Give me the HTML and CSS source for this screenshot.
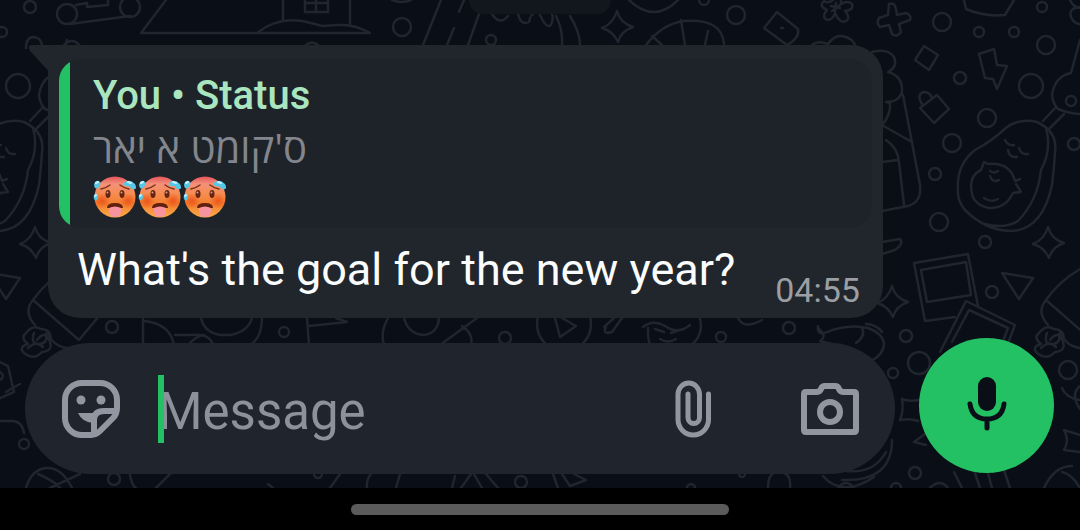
FILE: index.html
```html
<!DOCTYPE html>
<html lang="en">
<head>
<meta charset="utf-8">
<meta name="viewport" content="width=device-width, initial-scale=1">
<title>Chat</title>
<link rel="stylesheet" href="styles.css">
</head>
<body>
<div class="chat">
  <svg class="wallpaper" viewBox="0 0 1080 488" preserveAspectRatio="xMinYMin slice" aria-hidden="true">
    <defs>
      <path id="sparkle" d="M0-16Q3-4 16 0Q4 4 1 15Q-4 4-15 1Q-4-3 0-16Z"/>
      <g id="garden">
        <circle cx="1031" cy="86" r="12"/>
        <path d="M958 190Q956 165 975 150Q992 141 1007 127Q1020 118 1037 122Q1058 132 1055 152Q1054 170 1052 185Q1042 231 1010 231Q985 230 965 210Q957 200 958 190M1046 128Q1052 150 1041 170Q1038 200 1018 221Q1005 229 985 224M1043 121l13-14M1050 128l14-14"/>
        <path d="M972 194Q968 176 981 170L984 162L988 164Q1010 162 1015 181L1020 179M1016 184L1021 192L1013 193Q1006 208 990 208Q975 206 972 194M1005 140q3 6 9 5M1019 148q2 7 9 6M1008 150q1 8 9 7M990 171q4 3 8 0M990 176q2 7 9 4M984 198q7 5 14 1"/>
        <path d="M1080 40L1071 73Q1055 76 1052 95Q1053 104 1058 109Q1070 114 1082 114"/>
        <circle cx="1071" cy="101" r="5"/>
        <use href="#sparkle" x="1048" y="243"/>
        <path d="M1002 273L1033 278L1019 299Z"/>
        <path d="M1082 268Q1060 280 1046 300L1092 340M1046 300Q1036 312 1048 325M1060 333Q1068 348 1082 348M1092 340L1112 316"/>
        <path d="M1039 333q7-9 15-4q12 1 9 13q3 9-8 10q-8 9-18 1q-6-6 4-9q-8-6-2-11M1047 333q-4 12 6 11q8-1 6-10M1041 348q8-8 15-1M1050 340q8-10 12 0"/>
      </g>
    </defs>
    <rect width="1080" height="488" class="night"/>
    <g class="doodle">
      <use href="#garden"/>
      <use href="#garden" x="-1013"/>
      <circle cx="30" cy="7" r="6"/><circle cx="67" cy="14" r="10"/><circle cx="130" cy="7" r="10"/><circle cx="2" cy="32" r="5"/>
      <path d="M70 24L130 16M76 5L87 3V7L108 5V0M26 48Q26 37 34 37Q42 38 42 47M63 46Q72 36 80 46"/>
      <path d="M166 0L141 33H370Q355 24 338 25L322 26Q312 23 302 21Q277 17 257 33M283 0V20M350 0V24M305 0V12H328V0M316 0V12M305 3H328M306 45q6-5 12 0"/>
      <circle cx="402" cy="27" r="9"/><path d="M392 0q10 4 19 0"/>
      <path d="M441 0L423 45M464 0L459 12M454 28L447 45M479 14L468 45M492 14q8 12 16 2M518 14q3 12 11 8q2-8 4-8M540 15q5 12 10 11q4-5 2-12M556 16Q563 30 562 45M570 16Q580 32 580 45"/>
      <circle cx="491" cy="40" r="5"/>
      <use href="#sparkle" x="617" y="27"/>
      <path d="M629 0Q654 24 678 0M646 45Q662 24 684 21Q722 18 724 44M681 20L685 45M652 36L662 45M708 31L705 45"/>
      <circle cx="704" cy="0" r="5"/><circle cx="736" cy="15" r="9"/>
      <path d="M777 12L798 29Q800 38 787 45L764 28ZM781 28h2"/>
      <path d="M833 0Q828 4 824 1Q818 6 827 10Q821 17 827 20Q833 20 835 13Q840 24 846 21Q851 18 845 11Q854 10 852 4Q848 0 841 4V0M831 6L840 8M836 3L835 11M832 11L840 5"/>
      <path d="M812 45q6-5 16-1q6-9 14-8q12 2 14 12"/>
      <path d="M889 4q6-2 7 5l1 6l9-2q6 2 4 7l-11 4l2 8q-4 6-9 2l-3-9l-9 2q-4-4-1-9l9-3z"/>
      <circle cx="942" cy="22" r="9"/><circle cx="1042" cy="7" r="5"/><circle cx="979" cy="32" r="5"/><circle cx="1014" cy="32" r="5"/><circle cx="1046" cy="45" r="9"/>
      <path d="M964 0L966 9Q985 17 1005 15L1014 0M1070 0q3 7 10 8M1080 7Q1068 8 1071 17Q1074 24 1080 24"/>
      <path d="M924 46L938 55L929 70L915 60ZM979 54L994 49L997 65L1007 66L997 89L993 79L985 78ZM937 95L949 109L934 123L920 108Z"/>
      <path d="M922 104Q916 94 924 92Q930 92 932 98"/>
      <circle cx="960" cy="78" r="6"/><circle cx="987" cy="118" r="9"/><circle cx="952" cy="143" r="9"/><circle cx="935" cy="174" r="6"/><circle cx="1074" cy="144" r="6"/>
      <path d="M872 52q16-4 22 5q4 10-6 15q15 4 14 20q-3 10-16 10l4 1q1 12-8 22L910 141M903 95L920 185Q922 202 908 206L882 211M886 140Q898 148 899 162L904 205M882 162L898 160"/>
      <path d="M882 242L900 239Q904 244 895 250L882 254"/>
      <circle cx="939" cy="222" r="9"/><circle cx="985" cy="242" r="6"/><circle cx="992" cy="292" r="6"/>
      <path d="M914 263L968 254L978 306M914 263L925 321L955 317M921 270L966 262L971 295L927 302ZM940 352L966 301L1015 325L1007 346M952 342L969 310L1008 328L1002 344"/>
      <use href="#sparkle" x="892" y="302"/>
      <circle cx="906" cy="336" r="6"/><circle cx="919" cy="363" r="11"/><circle cx="893" cy="373" r="5"/><circle cx="1068" cy="370" r="9"/>
      <circle cx="112" cy="327" r="6"/><circle cx="284" cy="332" r="5"/>
      <path d="M143 318V345M143 321Q170 323 174 345M201 318Q204 332 220 335H230Q248 332 252 318M262 318Q262 338 250 345M175 335H190Q210 333 213 345M190 343q8-8 14-8M307 318L309 345M309 326L347 322L336 318M388 318Q380 332 384 345M404 318Q408 334 424 335Q438 333 439 318M440 345L477 318M462 326Q474 334 471 345"/>
      <circle cx="505" cy="338" r="6"/>
      <circle cx="564" cy="324" r="27"/><path d="M555 318L560 337L576 326L562 318M604 327L614 318M606 327q-4 8 6 5L622 318M643 327Q653 319 665 326Q678 335 690 325M648 328Q647 345 655 352M700 318Q704 336 690 346M655 329l9 3M671 333l9-3M660 339q8 5 16 0M738 318q6 12 24 2"/>
      <circle cx="721" cy="337" r="5"/><circle cx="789" cy="328" r="6"/>
      <path d="M818 326q-2 12 14 4Q850 324 868 328Q884 334 884 345Q882 356 872 360M818 328q10 8 2 13q14 4 22 4M862 328q4 8-6 15M866 324q10 0 16 8"/>
      <path d="M0 362L8 366L14 392M20 384q-8 4-14 8M0 398L14 392M0 421h12q10 0 12 12M0 372q6 4 0 8"/>
      <circle cx="24" cy="444" r="5"/><path d="M902 399Q909 402 919 400M902 399Q904 410 900 420Q910 418 918 421M914 442L925 434M914 442L926 445"/>
      <path d="M1062 388Q1066 398 1080 400M1080 386Q1070 394 1080 409M1064 430L1080 435M1064 430Q1070 440 1064 450L1080 452M1072 466Q1054 466 1044 488M1062 472Q1072 474 1080 488"/>
      <path d="M892 440Q892 482 842 480M886 452Q874 474 846 471M823 476Q842 498 874 477M838 488q8-10 16 0"/>
      <path d="M26 488Q32 468 48 468Q62 468 72 488M38 474Q56 482 60 488M80 474L50 488M130 475Q132 486 136 488M170 474L156 488M268 484l5 4M340 474L330 488M371 474Q366 480 367 488M400 474L396 488M455 476L452 488M471 474L461 488M474 474L482 488M486 474L498 488M553 474L558 488M562 474L570 486L586 480L574 474M768 488Q768 472 778 472Q792 472 790 488M954 472L962 488M975 473L980 488M988 473L992 488M1004 470L1010 488M930 488q10-10 18 0"/>
      <circle cx="114" cy="479" r="6"/><circle cx="521" cy="482" r="6"/><circle cx="915" cy="473" r="6"/><circle cx="742" cy="474" r="3"/><circle cx="896" cy="488" r="5"/><circle cx="691" cy="488" r="4"/><circle cx="318" cy="474" r="4"/>
    </g>
  </svg>

  <div class="date-chip"></div>

  <main class="messages">
    <article class="bubble">
      <svg class="tail" viewBox="0 0 24 30" aria-hidden="true"><path d="M4 0H24V30L2 6Q-1 0 4 0Z"/></svg>
      <blockquote class="quote">
        <div class="quote-bar"></div>
        <div class="quote-content">
          <p class="quote-title">You • Status</p>
          <p class="quote-text">ס'קומט א יאר</p>
          <div class="emojis" role="img" aria-label="Three hot faces">
            <svg class="emoji" viewBox="0 0 45 45">
              <defs>
                <linearGradient id="skin" x1="0" y1="0" x2="0" y2="1"><stop offset="0" stop-color="#e2545a"/><stop offset=".18" stop-color="#f4907a"/><stop offset=".4" stop-color="#f58e55"/><stop offset=".65" stop-color="#f4802f"/><stop offset="1" stop-color="#f9aa48"/></linearGradient>
                <radialGradient id="flush"><stop offset="0" stop-color="#e94a15" stop-opacity=".8"/><stop offset="1" stop-color="#e94a15" stop-opacity="0"/></radialGradient>
                <g id="hot-face">
                  <circle cx="22" cy="22" r="20.500" fill="url(#skin)"/>
                  <ellipse cx="9" cy="26" rx="8" ry="8" fill="url(#flush)"/><ellipse cx="35" cy="26" rx="8" ry="8" fill="url(#flush)"/>
                  <path d="M8 14Q13 13 17 10M27 10Q31 13 36 14" fill="none" stroke="#7a3018" stroke-width="1.500" stroke-linecap="round"/>
                  <ellipse cx="15" cy="19" rx="2.500" ry="4" fill="#682411"/><ellipse cx="29" cy="19" rx="2.500" ry="4" fill="#682411"/>
                  <circle cx="14.500" cy="17.500" r="1" fill="#d9a08d"/><circle cx="28.500" cy="17.500" r="1" fill="#d9a08d"/>
                  <path d="M15 33Q15 29 22 29Q29 29 29 33" fill="#63200f" stroke="#63200f" stroke-width="2" stroke-linejoin="round"/>
                  <path d="M16 33Q22 30 28 33V37Q27 42 22 42Q17 42 16 37Z" fill="#f893a0"/>
                  <path d="M1 10Q2 5 6 6Q9 8 6 12Q2 16 1 10ZM1 20Q4 17 5 21Q5 26 2 25Q0 24 1 20ZM31 8Q36 3 42 9Q45 15 40 14Q37 14 37 11Q30 12 31 8Z" fill="#55c8e8"/>
                  <path d="M3 8l2-1M35 7l3 1M2 21l1-1" stroke="#c5f4ff" stroke-width="2" stroke-linecap="round"/>
                </g>
              </defs>
              <use href="#hot-face"/>
            </svg>
            <svg class="emoji" viewBox="0 0 45 45"><use href="#hot-face"/></svg>
            <svg class="emoji" viewBox="0 0 45 45"><use href="#hot-face"/></svg>
          </div>
        </div>
      </blockquote>
      <div class="body">
        <p class="text">What's the goal for the new year?</p>
        <time class="time" datetime="04:55">04:55</time>
      </div>
    </article>
  </main>

  <form class="composer">
    <div class="field">
      <button class="icon-button" type="button" aria-label="Stickers">
        <svg class="icon-sticker" viewBox="0 0 58 58"><path class="line" d="M20 3H38A17 17 0 0 1 55 20V28Q55 34 51 38L38 51Q34 55 29 55H20A17 17 0 0 1 3 38V20A17 17 0 0 1 20 3ZM54 31H42Q32 31 32 40V54"/><circle cx="19" cy="20" r="4.500"/><circle cx="39" cy="20" r="4.500"/><path d="M16 33H35L31 43Q20 42 16 33Z"/></svg>
      </button>
      <div class="entry">
        <input class="input" type="text" placeholder="Message" aria-label="Message">
        <span class="caret"></span>
      </div>
      <button class="icon-button" type="button" aria-label="Attach">
        <svg class="icon-clip" viewBox="0 0 36 58"><path class="line" d="M33.500 14V39.500A15.250 15.500 0 0 1 3 39.500V14.500A10.750 11.500 0 0 1 24.500 14.500V37.500A5.750 6 0 0 1 13 37.500V14"/></svg>
      </button>
      <button class="icon-button" type="button" aria-label="Camera">
        <svg class="icon-camera" viewBox="0 0 58 52"><path class="line" d="M5 9H15Q19 9 20 6Q21 3 24 3H34Q37 3 38 6Q39 9 43 9H53Q55 9 55 11V47Q55 49 53 49H5Q3 49 3 47V11Q3 9 5 9Z"/><circle class="line" cx="29" cy="29" r="10"/></svg>
      </button>
    </div>
    <button class="mic" type="button" aria-label="Record voice message">
      <svg class="icon-mic" viewBox="0 0 40 56"><rect x="11" y="1" width="18" height="34" rx="9"/><path d="M3 28Q5 43 20 43Q35 43 37 28M20 43V52" fill="none" stroke="currentColor" stroke-width="5" stroke-linecap="round"/></svg>
    </button>
  </form>
</div>
<footer class="nav"><div class="handle"></div></footer>
</body>
</html>
```
FILE: styles.css
```css
* {
  box-sizing: border-box;
}

body {
  margin: 0;
  min-height: 100vh;
  display: flex;
  flex-direction: column;
  background: #000;
  font-family: Roboto, "Noto Sans", "Open Sans", sans-serif;
}

p,
blockquote {
  margin: 0;
}

button {
  padding: 0;
  border: 0;
  background: none;
  color: inherit;
}

.chat {
  position: relative;
  flex: 1;
  display: flex;
  flex-direction: column;
  justify-content: space-between;
  overflow: hidden;
  background: #090e17;
}

.wallpaper {
  position: absolute;
  inset: 0;
  width: 100%;
  height: 100%;
}

.night {
  fill: #090e17;
}

.doodle {
  fill: none;
  stroke: #20262d;
  stroke-width: 2.5;
  stroke-linejoin: round;
  stroke-linecap: round;
}

.date-chip {
  position: absolute;
  top: 0;
  left: 50%;
  width: 142px;
  height: 14px;
  transform: translateX(-50%);
  border-radius: 0 0 20px 20px;
  background: #12171e;
}

.messages {
  position: relative;
  display: flex;
  padding: 45px 48px 20px;
}

.bubble {
  position: relative;
  padding: 14px 11px 8px;
  border-radius: 0 32px 32px 32px;
  background: #20262c;
}

.tail {
  position: absolute;
  top: 0;
  left: -20px;
  width: 24px;
  height: 30px;
  fill: #20262c;
}

.quote {
  display: flex;
  overflow: hidden;
  border-radius: 22px;
  background: #1e2329;
}

.quote-bar {
  flex: none;
  width: 11px;
  background: #23c163;
}

.quote-content {
  padding: 12px 24px 8px 23px;
}

.quote-title {
  color: #a9e6c0;
  font-size: 40px;
  font-weight: 500;
  line-height: 50px;
}

.quote-text {
  color: #83868d;
  font-family: "Open Sans", "Noto Sans", sans-serif;
  font-size: 40px;
  line-height: 54px;
}

.emojis {
  display: flex;
}

.emoji {
  width: 45px;
  height: 45px;
}

.body {
  display: flex;
  align-items: flex-end;
  justify-content: space-between;
  gap: 40px;
  padding: 12px 12px 0 18px;
}

.text {
  padding-bottom: 10px;
  color: #fafcfd;
  font-size: 45px;
  line-height: 60px;
}

.time {
  color: #9b9fa3;
  font-size: 34px;
  line-height: 40px;
}

.composer {
  position: relative;
  display: flex;
  align-items: flex-start;
  gap: 24px;
  padding: 0 26px 14px 25px;
}

.field {
  flex: 1;
  min-width: 0;
  display: flex;
  align-items: center;
  height: 131px;
  margin-top: 5px;
  padding: 0 36px 0 37px;
  border-radius: 66px;
  background: #20252d;
  color: #9296a0;
}

.icon-button {
  display: flex;
  flex: none;
}

.icon-button svg {
  height: 58px;
  fill: currentColor;
}

.icon-button .icon-camera {
  height: 52px;
}

.icon-button .line {
  fill: none;
  stroke: currentColor;
  stroke-width: 6;
  stroke-linecap: round;
  stroke-linejoin: round;
}

.icon-button .icon-clip .line {
  stroke-width: 5;
}

.icon-button + .icon-button {
  margin-left: 90px;
}

.entry {
  position: relative;
  flex: 1;
  min-width: 0;
  margin: 0 24px 0 38px;
}

.input {
  display: block;
  width: 100%;
  height: 68px;
  padding: 6px 0 0;
  border: 0;
  outline: 0;
  background: none;
  color: #fafcfd;
  font-family: inherit;
  font-size: 51px;
}

.input::placeholder {
  color: #8d919b;
  opacity: 1;
}

.caret {
  position: absolute;
  top: 0;
  left: 0;
  width: 6px;
  height: 68px;
  background: #23c163;
}

.mic {
  flex: none;
  display: flex;
  align-items: center;
  justify-content: center;
  width: 135px;
  height: 135px;
  padding-bottom: 4px;
  border-radius: 50%;
  background: #23c163;
  color: #090e17;
}

.icon-mic {
  height: 56px;
  fill: currentColor;
}

.nav {
  display: flex;
  align-items: center;
  justify-content: center;
  height: 42px;
}

.handle {
  width: 35%;
  height: 11px;
  border-radius: 6px;
  background: #5b5b5b;
}
```
